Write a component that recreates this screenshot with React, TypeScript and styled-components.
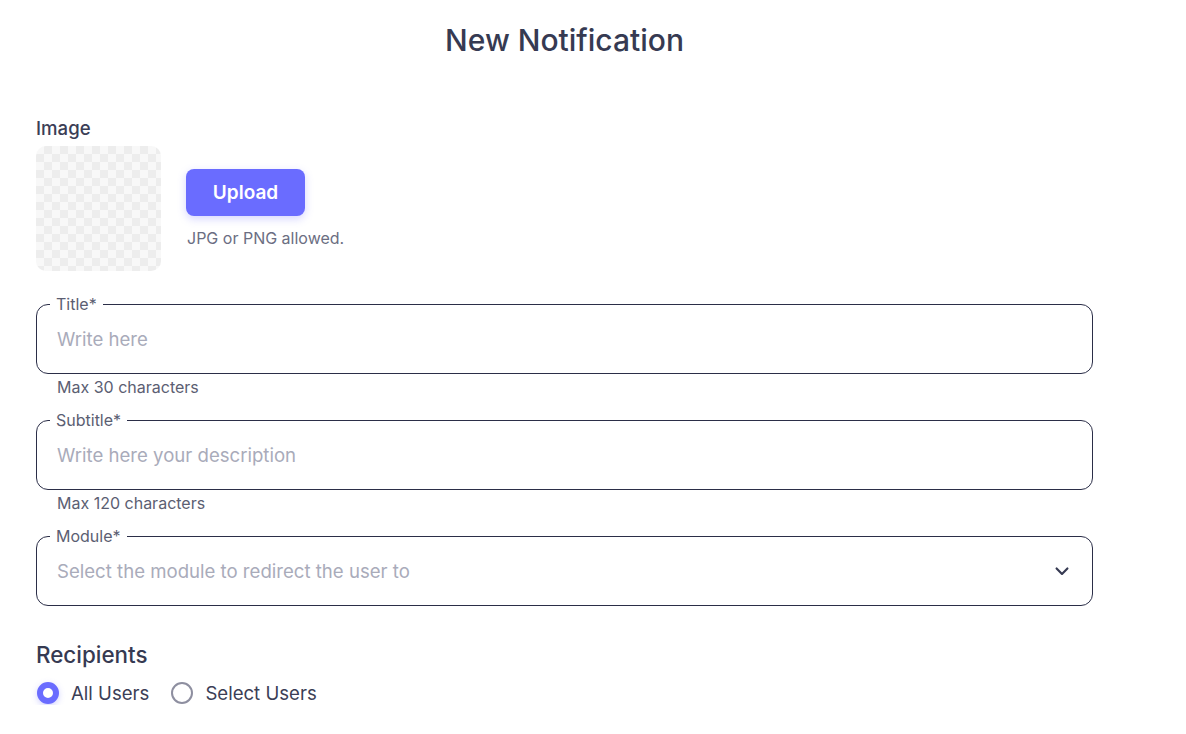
import React from 'react';
import styled, { createGlobalStyle } from 'styled-components';

const GlobalStyle = createGlobalStyle`
    html, body {
        margin: 0;
        padding: 0;
        background: #ffffff;
        font-family: Inter, "Noto Sans", sans-serif;
        color: #363a52;
    }
    * {
        box-sizing: border-box;
    }
`

type FieldProps = {
    label: string,
    placeholder: string,
    helper?: string,
    select?: boolean,
}

const Field: React.FC<FieldProps> = ({ label, placeholder, helper, select }) => {
    return (
        <FieldGroup>
            <Outline>
                <Legend>{label}</Legend>
                <InputRow>
                    <Input placeholder={placeholder} readOnly={select} />
                    {select && (
                        <svg width="20" height="20" viewBox="0 0 24 24" fill="none"
                            stroke="#363a52" strokeWidth="2.6" strokeLinecap="round" strokeLinejoin="round">
                            <path d="M5.5 9l6.5 6.5 6.5-6.5" />
                        </svg>
                    )}
                </InputRow>
            </Outline>
            {helper && <Helper>{helper}</Helper>}
        </FieldGroup>
    );
};

type RadioProps = {
    label: string,
    checked?: boolean,
}

const Radio: React.FC<RadioProps> = ({ label, checked }) => (
    <RadioLabel>
        <RadioDot $checked={!!checked} />
        {label}
    </RadioLabel>
);

export default function App() {
    return (
        <>
            <GlobalStyle />
            <Page>
                <Heading>New Notification</Heading>

                <Section>
                    <SectionLabel>Image</SectionLabel>
                    <ImageRow>
                        <Preview />
                        <UploadColumn>
                            <UploadButton>Upload</UploadButton>
                            <Hint>JPG or PNG allowed.</Hint>
                        </UploadColumn>
                    </ImageRow>
                </Section>

                <Fields>
                    <Field label="Title*" placeholder="Write here" helper="Max 30 characters" />
                    <Field label="Subtitle*" placeholder="Write here your description" helper="Max 120 characters" />
                    <Field label="Module*" placeholder="Select the module to redirect the user to" select />
                </Fields>

                <Recipients>
                    <RecipientsTitle>Recipients</RecipientsTitle>
                    <RadioRow>
                        <Radio label="All Users" checked />
                        <Radio label="Select Users" />
                    </RadioRow>
                </Recipients>
            </Page>
        </>
    );
}

const Page = styled.div`
    width: 1057px;
    margin-left: 36px;
    padding-top: 21px;
    display: flex;
    flex-direction: column;
`

const Heading = styled.h1`
    margin: 0;
    text-align: center;
    font-size: 30px;
    font-weight: 500;
    line-height: 38px;
    color: #363a52;
`

const Section = styled.div`
    margin-top: 57px;
    display: flex;
    flex-direction: column;
    gap: 6px;
`

const SectionLabel = styled.div`
    font-size: 18.6px;
    font-weight: 500;
    line-height: 24px;
    color: #3b3e56;
`

const ImageRow = styled.div`
    display: flex;
    align-items: flex-start;
    gap: 25px;
`

const Preview = styled.div`
    width: 125px;
    height: 125px;
    border-radius: 10px;
    background-color: #f8f8f8;
    background-image:
        linear-gradient(45deg, #ededed 25%, transparent 25%, transparent 75%, #ededed 75%),
        linear-gradient(45deg, #ededed 25%, transparent 25%, transparent 75%, #ededed 75%);
    background-size: 16px 16px;
    background-position: 0 0, 8px 8px;
`

const UploadColumn = styled.div`
    padding-top: 23px;
    display: flex;
    flex-direction: column;
    gap: 12px;
`

const UploadButton = styled.button`
    width: 119px;
    height: 47px;
    border: none;
    border-radius: 8px;
    background: #6a6cff;
    color: #ffffff;
    font-family: inherit;
    font-size: 19px;
    font-weight: 600;
    box-shadow: 0 3px 8px rgba(106, 108, 255, 0.28);
    cursor: pointer;
`

const Hint = styled.div`
    padding-left: 1px;
    font-size: 16px;
    line-height: 20px;
    color: #6b6e82;
`

const Fields = styled.div`
    margin-top: 24px;
    display: flex;
    flex-direction: column;
    gap: 14px;
`

const FieldGroup = styled.div`
    display: flex;
    flex-direction: column;
`

const Outline = styled.fieldset`
    margin: 0;
    padding: 0 20px 9px;
    border: 1px solid #2b2e48;
    border-radius: 12px;
    min-width: 0;
`

const Legend = styled.legend`
    margin-left: -7px;
    padding: 0 6px;
    font-size: 16px;
    line-height: 18px;
    color: #5b5e72;
`

const InputRow = styled.div`
    height: 51px;
    display: flex;
    align-items: center;
    justify-content: space-between;
    padding-right: 0;
`

const Input = styled.input`
    flex: 1;
    border: none;
    outline: none;
    padding: 0;
    font-family: inherit;
    font-size: 18.6px;
    color: #363a52;
    background: transparent;

    &::placeholder {
        color: #a9abba;
    }
`

const Helper = styled.div`
    margin-top: 3px;
    padding-left: 21px;
    font-size: 16px;
    line-height: 20px;
    color: #5b5e72;
`

const Recipients = styled.div`
    margin-top: 35px;
    display: flex;
    flex-direction: column;
    gap: 12px;
`

const RecipientsTitle = styled.div`
    font-size: 22.4px;
    font-weight: 500;
    line-height: 28px;
    color: #363a52;
`

const RadioRow = styled.div`
    display: flex;
    align-items: center;
    gap: 22px;
    padding-left: 1px;
`

const RadioLabel = styled.label`
    display: flex;
    align-items: center;
    gap: 12px;
    font-size: 18.6px;
    line-height: 24px;
    color: #3b3e56;
    cursor: pointer;
`

const RadioDot = styled.span<{ $checked: boolean }>`
    width: 22px;
    height: 22px;
    border-radius: 50%;
    flex-shrink: 0;
    background: #ffffff;
    ${({ $checked }) => $checked
        ? `
            border: 6px solid #6a6cff;
            box-shadow: 0 2px 6px rgba(106, 108, 255, 0.3);
        `
        : `
            border: 2.5px solid #8e8fa0;
        `}
`
